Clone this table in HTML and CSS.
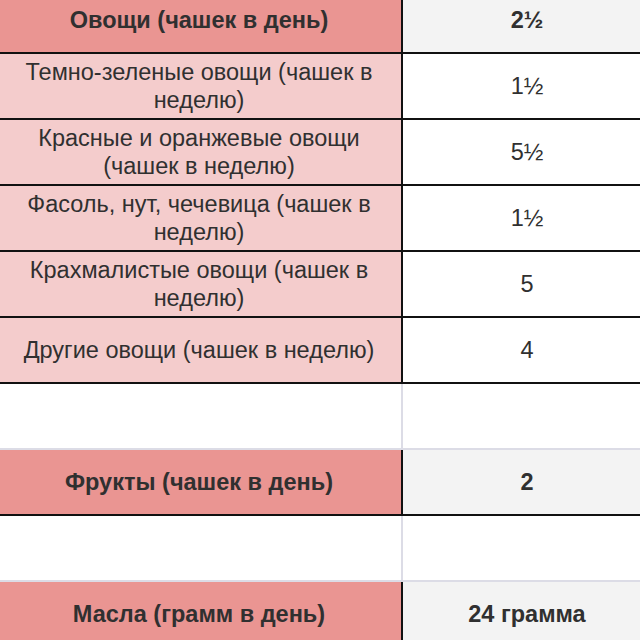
FILE: index.html
```html
<!DOCTYPE html>
<html lang="ru">
<head>
<meta charset="utf-8">
<title>Овощи и фрукты</title>
<link rel="stylesheet" href="styles.css">
</head>
<body>
<table class="sheet">
  <colgroup><col class="c-name"><col class="c-val"></colgroup>
  <tr class="main">
    <td class="name">Овощи (чашек в день)</td>
    <td class="val">2½</td>
  </tr>
  <tr class="sub">
    <td class="name">Темно-зеленые овощи (чашек в неделю)</td>
    <td class="val">1½</td>
  </tr>
  <tr class="sub">
    <td class="name">Красные и оранжевые овощи (чашек в неделю)</td>
    <td class="val">5½</td>
  </tr>
  <tr class="sub">
    <td class="name">Фасоль, нут, чечевица (чашек в неделю)</td>
    <td class="val">1½</td>
  </tr>
  <tr class="sub">
    <td class="name">Крахмалистые овощи (чашек в неделю)</td>
    <td class="val">5</td>
  </tr>
  <tr class="sub">
    <td class="name">Другие овощи (чашек в неделю)</td>
    <td class="val">4</td>
  </tr>
  <tr class="empty">
    <td class="name"></td>
    <td class="val"></td>
  </tr>
  <tr class="main">
    <td class="name">Фрукты (чашек в день)</td>
    <td class="val">2</td>
  </tr>
  <tr class="empty">
    <td class="name"></td>
    <td class="val"></td>
  </tr>
  <tr class="main">
    <td class="name">Масла (грамм в день)</td>
    <td class="val">24 грамма</td>
  </tr>
</table>
</body>
</html>
```
FILE: styles.css
```css
html, body {
  margin: 0;
  padding: 0;
  background: #ffffff;
  overflow: hidden;
}

.sheet {
  border-collapse: collapse;
  table-layout: fixed;
  width: 656px;
  margin-top: -14px;
  margin-left: -5px;
  font-family: "Liberation Sans", Arial, sans-serif;
  font-size: 23.5px;
  line-height: 28px;
  color: #303030;
}

.c-name { width: 406px; }
.c-val { width: 250px; }

.sheet td {
  height: 66px;
  padding: 0 9px;
  text-align: center;
  vertical-align: middle;
  border: 2px solid #111111;
  box-sizing: border-box;
}

.main td { font-weight: bold; }
.main .name { background: #ea9592; }
.main .val { background: #f3f3f3; }

.sub .name { background: #f4cccc; }
.sub .val { background: #ffffff; }

.empty td {
  background: #ffffff;
  border-left-color: #dcdce6;
  border-right-color: #dcdce6;
  border-bottom-color: #dcdce6;
}
.empty + .main td { border-top-color: #dcdce6; }
.main + .empty td { border-top-color: #111111; }
.empty .name { border-right-color: #dcdce6; }
```
